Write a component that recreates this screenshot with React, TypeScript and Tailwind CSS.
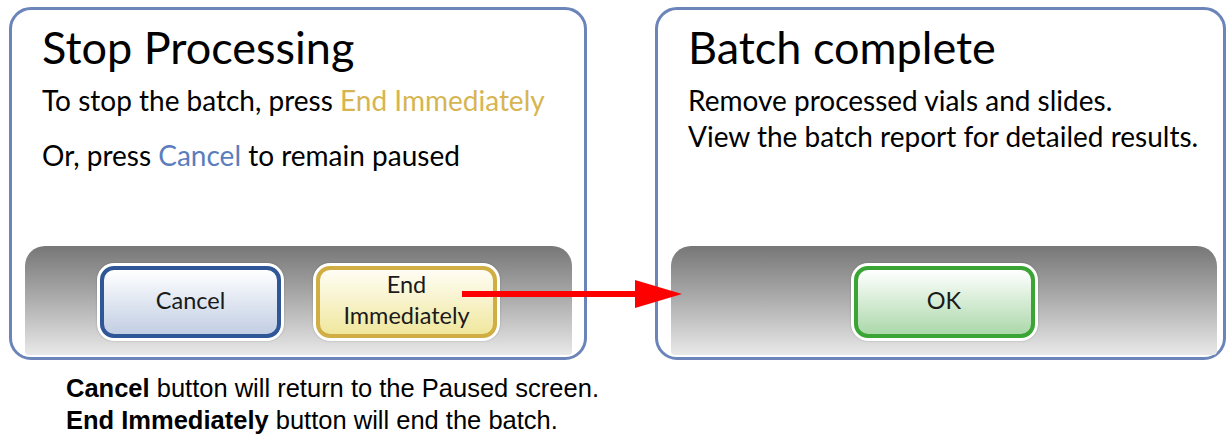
import type { ReactNode } from 'react';

type Tone = 'blue' | 'gold' | 'green';

const toneClass: Record<Tone, string> = {
  blue: 'border-[#2f5697] bg-gradient-to-b from-white to-[#c2cee3]',
  gold: 'border-[#d1ae43] bg-gradient-to-b from-[#fffdf4] to-[#f0e79c]',
  green: 'border-[#3aa535] bg-gradient-to-b from-white to-[#abd8aa]',
};

const ScreenButton = ({ tone, children }: { tone: Tone; children: ReactNode }) => (
  <div className="w-[187px] h-[78px] rounded-[17px] bg-white p-[3px] shadow-[0_0_2px_rgba(0,0,0,0.25)]">
    <div
      className={`h-full w-full rounded-[14px] border-4 flex items-center justify-center text-center text-[23.5px] leading-[31px] text-[#1a1a1a] pb-[3px] ${toneClass[tone]}`}
    >
      {children}
    </div>
  </div>
);

type PanelProps = { className: string; children: ReactNode; buttons: ReactNode };

const Panel = ({ className, children, buttons }: PanelProps) => (
  <div className={`h-[353px] shrink-0 rounded-[22px] border-[3px] border-[#6b84b9] bg-white flex flex-col pl-[13px] pb-[2px] ${className}`}>
    <div className="flex-1 pl-[17px] pt-[15px]">{children}</div>
    <div className="h-[109px] rounded-t-[20px] rounded-b-[4px] bg-gradient-to-b from-[#777777] to-[#e9e9e9] flex items-center justify-center gap-[29px] pt-[2px]">
      {buttons}
    </div>
  </div>
);

export default function App() {
  return (
    <div className="relative w-[1226px] h-[438px] overflow-hidden bg-white font-['Lato',sans-serif] text-black">
      <div className="flex gap-[68px] pl-[9px] pt-[7px]">
        <Panel
          className="w-[578px] pr-[12px]"
          buttons={
            <>
              <ScreenButton tone="blue">Cancel</ScreenButton>
              <ScreenButton tone="gold">
                End
                <br />
                Immediately
              </ScreenButton>
            </>
          }
        >
          <h1 className="text-[45px] leading-[45px]">Stop Processing</h1>
          <p className="mt-[16px] text-[28px] leading-[28px]">
            To stop the batch, press <span className="text-[#d6b550]">End Immediately</span>
          </p>
          <p className="mt-[27px] text-[28px] leading-[28px]">
            Or, press <span className="text-[#5b7dbd]">Cancel</span> to remain paused
          </p>
        </Panel>

        <Panel className="w-[571px] pr-[6px]" buttons={<ScreenButton tone="green">OK</ScreenButton>}>
          <h1 className="text-[45px] leading-[45px]">Batch complete</h1>
          <div className="mt-[12px] text-[28px] leading-[36px]">
            <p>Remove processed vials and slides.</p>
            <p>View the batch report for detailed results.</p>
          </div>
        </Panel>
      </div>

      <div className="pl-[66px] pt-[12px] font-['Liberation_Sans',Arial,sans-serif] text-[25.5px] leading-[32px]">
        <p>
          <b>Cancel</b> button will return to the Paused screen.
        </p>
        <p>
          <b>End Immediately</b> button will end the batch.
        </p>
      </div>

      {/* arrow from End Immediately over to the Batch complete screen */}
      <svg className="absolute left-[462px] top-[279px]" width="222" height="30" viewBox="0 0 222 30">
        <rect x="0" y="12" width="176" height="6" fill="#ff0000" />
        <polygon points="173,1 220,15 173,29" fill="#ff0000" />
      </svg>
    </div>
  );
}
